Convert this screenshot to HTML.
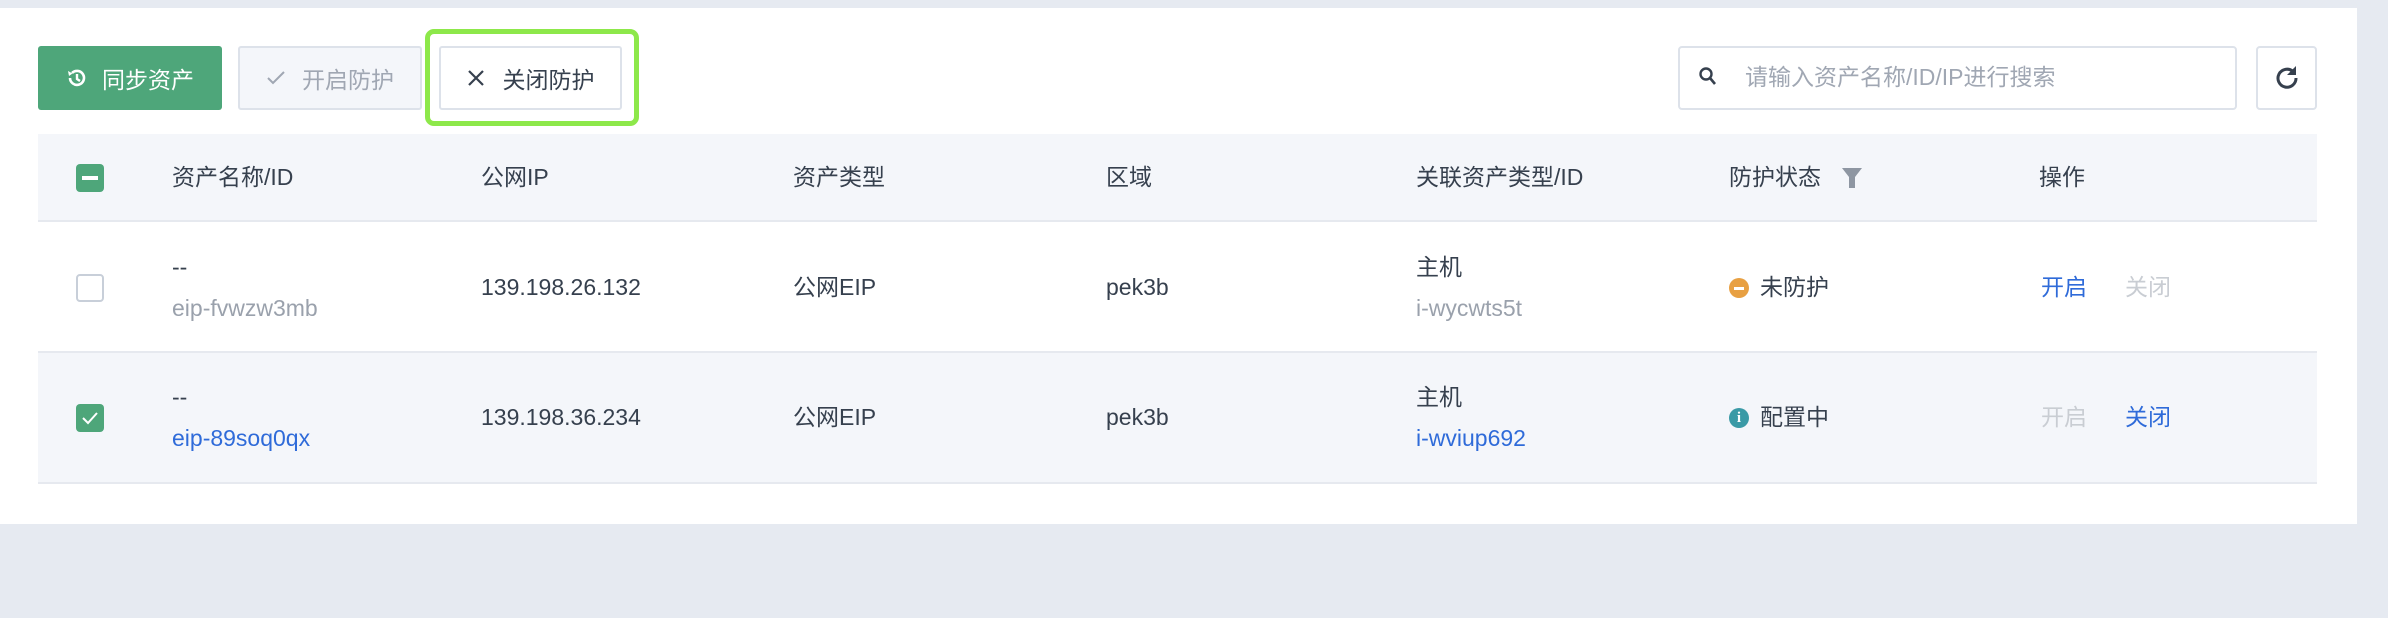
<!DOCTYPE html>
<html><head><meta charset="utf-8"><style>
*{box-sizing:border-box;margin:0;padding:0}
body{width:2388px;height:618px;background:#e6eaf1;position:relative;overflow:hidden;font-family:"Liberation Sans","Noto Sans CJK SC",sans-serif;color:#36404e;font-size:23px}
.abs{position:absolute}
.panel{left:0;top:8px;width:2357px;height:516px;background:#fff}
.btn{top:46px;height:64px;border-radius:3px;display:flex;align-items:center;justify-content:center;font-size:23px}
.hdr{left:38px;top:134px;width:2279px;height:88px;background:#f4f6fa;border-bottom:2px solid #e6e9ef}
.row{left:38px;width:2279px;border-bottom:2px solid #e6e9ef}
.t{position:absolute;white-space:nowrap;line-height:1}
.cb{position:absolute;left:76px;width:28px;height:28px;border-radius:4px}
</style></head><body>
<div class="abs panel"></div>
<div class="abs btn" style="left:38px;width:184px;background:#4ea67a;color:#fff">
<svg width="22" height="22" viewBox="0 0 22 22" style="margin-right:14px"><path d="M4 11a7 7 0 1 0 2-5" fill="none" stroke="#fff" stroke-width="2.6"/><path d="M2 4l4.5 2.5L3 9z" fill="#fff"/><path d="M11 7v5l3 2" fill="none" stroke="#fff" stroke-width="2.4"/></svg>同步资产</div>
<div class="abs btn" style="left:238px;width:184px;background:#f4f6fa;border:2px solid #dde2ea;color:#a0a7b3">
<svg width="20" height="16" viewBox="0 0 20 16" style="margin-right:16px"><path d="M2 8l5 5L18 2" fill="none" stroke="#a0a7b3" stroke-width="2"/></svg>开启防护</div>
<div class="abs" style="left:425px;top:29px;width:214px;height:97px;border:5px solid #8de84a;border-radius:9px"></div>
<div class="abs btn" style="left:439px;width:183px;background:#fff;border:2px solid #dde2ea;color:#36404e">
<svg width="18" height="18" viewBox="0 0 18 18" style="margin-right:18px"><path d="M2 2l14 14M16 2L2 16" stroke="#36404e" stroke-width="2.2"/></svg>关闭防护</div>
<div class="abs" style="left:1678px;top:46px;width:559px;height:64px;border:2px solid #dde2ea;border-radius:4px;background:#fff"></div>
<svg class="abs" style="left:1698px;top:66px" width="20" height="22" viewBox="0 0 20 22"><circle cx="8" cy="8" r="5.5" fill="none" stroke="#36404e" stroke-width="2.4"/><path d="M12 12l5 6" stroke="#36404e" stroke-width="2.6"/></svg>
<div class="t" style="left:1745px;top:66px;color:#a0a7b3;font-size:23px">请输入资产名称/ID/IP进行搜索</div>
<div class="abs" style="left:2256px;top:46px;width:61px;height:64px;border:2px solid #dde2ea;border-radius:4px;background:#fff"></div>
<svg class="abs" style="left:2272px;top:63px" width="30" height="30" viewBox="0 0 30 30"><path d="M21 8.5A9 9 0 1 0 24 15" fill="none" stroke="#36404e" stroke-width="3"/><path d="M24 3v9h-9z" fill="#36404e"/></svg>

<div class="abs hdr"></div>
<div class="cb" style="top:164px;background:#4ea67a"><div style="position:absolute;left:6px;top:12px;width:16px;height:4px;background:#fff"></div></div>
<div class="t" style="left:172px;top:166px">资产名称/ID</div>
<div class="t" style="left:481px;top:166px">公网IP</div>
<div class="t" style="left:793px;top:166px">资产类型</div>
<div class="t" style="left:1106px;top:166px">区域</div>
<div class="t" style="left:1416px;top:166px">关联资产类型/ID</div>
<div class="t" style="left:1729px;top:166px">防护状态</div>
<svg class="abs" style="left:1841px;top:167px" width="22" height="22" viewBox="0 0 22 22"><path d="M1 1h20l-7 9v11h-6V10z" fill="#8e96a2"/></svg>
<div class="t" style="left:2039px;top:166px">操作</div>

<div class="abs row" style="top:222px;height:131px;background:#fff"></div>
<div class="cb" style="top:274px;border:2px solid #c8cfd9;background:#fff"></div>
<div class="t" style="left:172px;top:256px">--</div>
<div class="t" style="left:172px;top:297px;color:#9aa1ac">eip-fvwzw3mb</div>
<div class="t" style="left:481px;top:276px">139.198.26.132</div>
<div class="t" style="left:793px;top:276px">公网EIP</div>
<div class="t" style="left:1106px;top:276px">pek3b</div>
<div class="t" style="left:1416px;top:256px">主机</div>
<div class="t" style="left:1416px;top:297px;color:#9aa1ac">i-wycwts5t</div>
<div class="abs" style="left:1729px;top:278px;width:20px;height:20px;border-radius:50%;background:#e8a042"><div style="position:absolute;left:5px;top:9px;width:10px;height:3px;background:#fff"></div></div>
<div class="t" style="left:1760px;top:276px">未防护</div>
<div class="t" style="left:2041px;top:276px;color:#2f6bd9">开启</div>
<div class="t" style="left:2125px;top:276px;color:#c9cdd3">关闭</div>

<div class="abs row" style="top:353px;height:131px;background:#f4f6fa"></div>
<div class="cb" style="top:404px;background:#4ea67a"><svg width="28" height="28" viewBox="0 0 28 28"><path d="M7 14l5 5 9-10" fill="none" stroke="#fff" stroke-width="2"/></svg></div>
<div class="t" style="left:172px;top:386px">--</div>
<div class="t" style="left:172px;top:427px;color:#2f6bd9">eip-89soq0qx</div>
<div class="t" style="left:481px;top:406px">139.198.36.234</div>
<div class="t" style="left:793px;top:406px">公网EIP</div>
<div class="t" style="left:1106px;top:406px">pek3b</div>
<div class="t" style="left:1416px;top:386px">主机</div>
<div class="t" style="left:1416px;top:427px;color:#2f6bd9">i-wviup692</div>
<div class="abs" style="left:1729px;top:408px;width:20px;height:20px;border-radius:50%;background:#3a9aa6;color:#fff;font-size:15px;font-weight:bold;text-align:center;line-height:20px;font-family:'Liberation Serif',serif">i</div>
<div class="t" style="left:1760px;top:406px">配置中</div>
<div class="t" style="left:2041px;top:406px;color:#c9cdd3">开启</div>
<div class="t" style="left:2125px;top:406px;color:#2f6bd9">关闭</div>
</body></html>
